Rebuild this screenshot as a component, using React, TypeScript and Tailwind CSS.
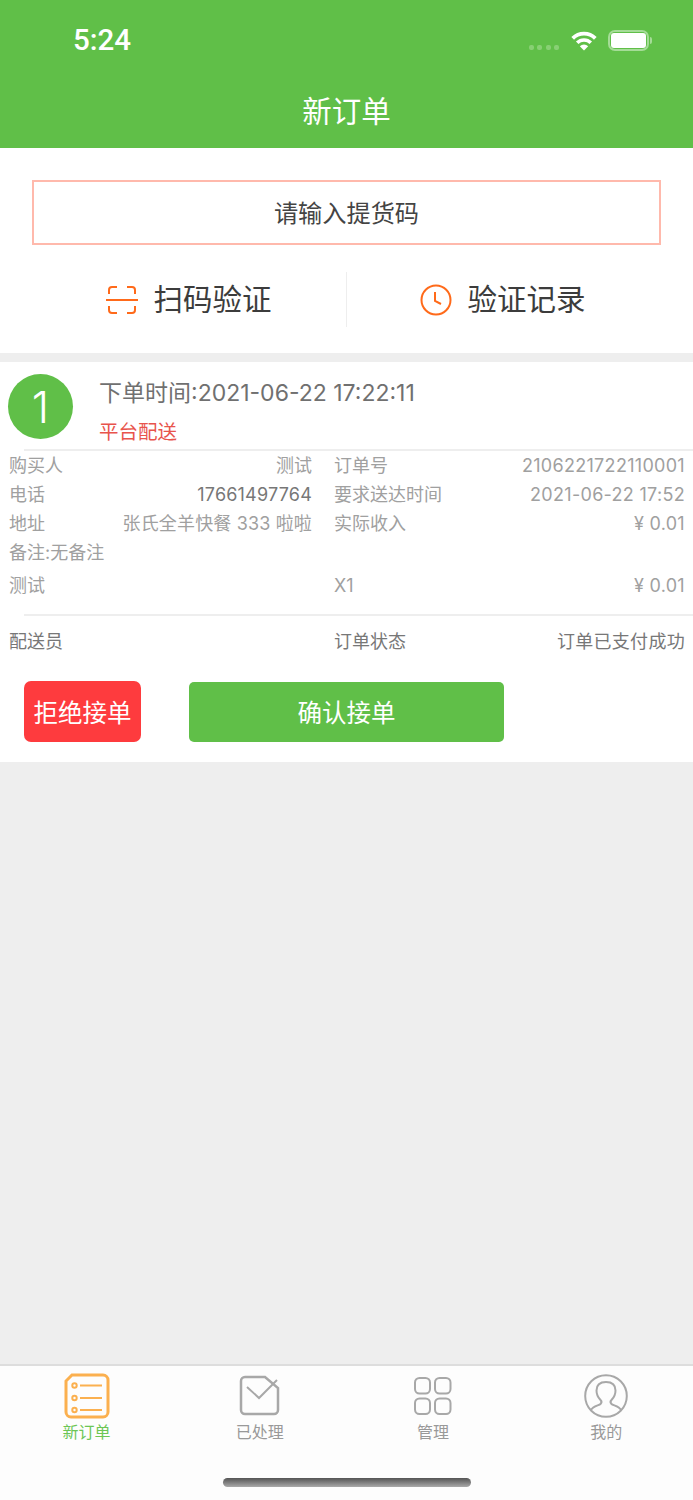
function WifiIcon() {
    return (
        <svg width="28" height="21" viewBox="0 0 28 21" fill="none" stroke="white">
            <path d="M2.700 8.300A16 16 0 0 1 25.300 8.300" strokeWidth="3.800" />
            <path d="M7.200 12.800A9.600 9.600 0 0 1 20.800 12.800" strokeWidth="3.500" />
            <path d="M14 20.500L9.800 16.300A6 6 0 0 1 18.200 16.300Z" fill="white" stroke="none" />
        </svg>
    );
}

function ScanIcon() {
    return (
        <svg width="32" height="30" viewBox="0 0 32 30" fill="none" stroke="#ff6a1a" strokeWidth="2">
            <path d="M3 9V5a3 3 0 0 1 3-3h5" />
            <path d="M21 2h5a3 3 0 0 1 3 3v4" />
            <path d="M3 21v4a3 3 0 0 0 3 3h5" />
            <path d="M21 28h5a3 3 0 0 0 3-3v-4" />
            <path d="M0 15h32" />
        </svg>
    );
}

function ClockIcon() {
    return (
        <svg width="32" height="32" viewBox="0 0 32 32" fill="none" stroke="#ff6a1a" strokeWidth="2">
            <circle cx="16" cy="16" r="14.500" />
            <path d="M15 8v9l6 3" />
        </svg>
    );
}

function OrderIcon() {
    return (
        <svg width="46" height="46" viewBox="0 0 46 46" fill="none" stroke="#fbb04f">
            <path d="M8 2h31a5 5 0 0 1 5 5v32a5 5 0 0 1-5 5H7a5 5 0 0 1-5-5V8z" strokeWidth="3" />
            <circle cx="10.500" cy="12.500" r="2.200" strokeWidth="2" />
            <circle cx="10.500" cy="25" r="2.200" strokeWidth="2" />
            <circle cx="10.500" cy="37" r="2.200" strokeWidth="2" />
            <path d="M16 12.500h22M16 25h22M16 37h22" strokeWidth="2.200" />
        </svg>
    );
}

function DoneIcon() {
    return (
        <svg width="41" height="41" viewBox="0 0 41 41" fill="none" stroke="#a8a8a8" strokeWidth="2.500" className="-mt-[1px]">
            <path d="M26 2H6a4 4 0 0 0-4 4v29a4 4 0 0 0 4 4h29a4 4 0 0 0 4-4V13z" />
            <path d="M8 12l12 11L38 5" strokeWidth="2" />
        </svg>
    );
}

function ManageIcon() {
    return (
        <svg width="38" height="38" viewBox="0 0 38 38" fill="none" stroke="#a8a8a8" strokeWidth="2" className="-mt-[1px]">
            <rect x="1" y="1" width="15" height="15.500" rx="4.500" />
            <rect x="21" y="1" width="15.500" height="15.500" rx="4.500" />
            <rect x="1" y="21.500" width="15" height="15.500" rx="4.500" />
            <rect x="21" y="21.500" width="15.500" height="15.500" rx="4.500" />
        </svg>
    );
}

function MineIcon() {
    return (
        <svg width="44" height="44" viewBox="0 0 44 44" fill="none" stroke="#a8a8a8" strokeWidth="2" className="-mt-[1px]">
            <circle cx="22" cy="22" r="20.800" />
            <path d="M7 36c2-4 8-4.500 9.500-6 1.500-1.500 1-3 0-4-2-2-4-5-4-9.500C12.500 11 16 8 22 8s9.500 3 9.500 8.500c0 4.500-2 7.500-4 9.500-1 1-1.500 2.500 0 4 1.500 1.500 7.500 2 9.500 6" />
        </svg>
    );
}

function InfoRow({ label, value, valueClass = 'text-[#a0a0a0]' }: { label: string; value: string; valueClass?: string }) {
    return (
        <div className="flex justify-between items-center h-[29px]">
            <span>{label}</span>
            <span className={valueClass}>{value}</span>
        </div>
    );
}

function TabItem({ icon, label, active = false }: { icon: React.ReactNode; label: string; active?: boolean }) {
    return (
        <div className="flex-1 flex flex-col items-center">
            <div className="h-[46px] flex items-center justify-center">{icon}</div>
            <span className={`mt-[2px] text-[16px] leading-[22px] ${active ? 'text-[#6cc655]' : 'text-[#999]'}`}>{label}</span>
        </div>
    );
}

export default function App() {
    return (
        <div className="w-[693px] h-[1500px] flex flex-col bg-[#eeeeee] font-['Inter','Noto_Sans_CJK_SC',sans-serif] overflow-hidden">
            <div className="h-[148px] bg-[#60bf48] text-white shrink-0">
                <div className="h-[80px] flex items-center justify-between pl-[73px] pr-[41px]">
                    <span className="text-[29.500px] font-medium font-['Roboto',sans-serif]">5:24</span>
                    <div className="flex items-center">
                        <div className="flex gap-[3.500px] mt-[14px] mr-[11px]">
                            <div className="w-[5px] h-[5px] rounded-[2px] bg-[#88d074]" />
                            <div className="w-[5px] h-[5px] rounded-[2px] bg-[#88d074]" />
                            <div className="w-[5px] h-[5px] rounded-[2px] bg-[#88d074]" />
                            <div className="w-[5px] h-[5px] rounded-[2px] bg-[#88d074]" />
                        </div>
                        <WifiIcon />
                        <div className="w-[41px] h-[21px] ml-[10px] rounded-[7px] border-2 border-[#a5dc97] p-[1px]">
                            <div className="w-full h-full rounded-[3px] bg-white" />
                        </div>
                        <div className="w-[2px] h-[7px] ml-[1px] rounded-r bg-[#a5dc97]" />
                    </div>
                </div>
                <div className="h-[62px] pt-[1px] flex items-center justify-center text-[29.500px]">新订单</div>
            </div>

            <div className="h-[205px] bg-white shrink-0 pt-[32px] px-[32px]">
                <div className="h-[65px] pt-[3px] border-2 border-[#ffb9ac] flex items-center justify-center text-[24.200px] text-[#444]">
                    请输入提货码
                </div>
                <div className="flex items-center -mx-[32px] mt-[27px] h-[55px] text-[29.500px] text-[#3c3c3c]">
                    <div className="w-[346px] flex items-center justify-center gap-[15px] pl-[32px]">
                        <ScanIcon />
                        <span>扫码验证</span>
                    </div>
                    <div className="w-px h-full bg-[#eeeeee]" />
                    <div className="flex-1 flex items-center justify-center gap-[15px] pr-[34px]">
                        <ClockIcon />
                        <span>验证记录</span>
                    </div>
                </div>
            </div>

            <div className="mt-[9px] h-[400px] bg-white shrink-0">
                <div className="flex h-[87px] pl-[8px] pt-[12px]">
                    <div className="w-[65px] h-[65px] rounded-full bg-[#60bf48] text-white text-[44px] font-light flex items-center justify-center">1</div>
                    <div className="ml-[26px]">
                        <div className="text-[23px] leading-[38px] text-[#707070]">下单时间:2021-06-22 17:22:11</div>
                        <div className="text-[19.500px] leading-[28px] mt-[6px] text-[#e8544c]">平台配送</div>
                    </div>
                </div>
                <div className="h-[2px] ml-[24px] bg-[#eeeeee]" />
                <div className="grid grid-cols-[303px_351px] gap-x-[22px] pl-[9px] text-[18px] text-[#a0a0a0]">
                    <div>
                        <InfoRow label="购买人" value="测试" />
                        <InfoRow label="电话" value="17661497764" valueClass="text-[#777] tracking-[0.2px]" />
                        <InfoRow label="地址" value="张氏全羊快餐 333 啦啦" valueClass="text-[#a0a0a0] tracking-[0.150px]" />
                    </div>
                    <div>
                        <InfoRow label="订单号" value="2106221722110001" valueClass="text-[#a0a0a0] tracking-[0.3px]" />
                        <InfoRow label="要求送达时间" value="2021-06-22 17:52" valueClass="text-[#a0a0a0] tracking-[0.3px]" />
                        <InfoRow label="实际收入" value="¥ 0.01" valueClass="text-[#a0a0a0] tracking-[0.3px]" />
                    </div>
                </div>
                <div className="pl-[9px] h-[29px] flex items-center text-[18px] text-[#a0a0a0]">备注:无备注</div>
                <div className="grid grid-cols-[303px_351px] gap-x-[22px] pl-[9px] mt-[4px] h-[29px] items-center text-[18px] text-[#a0a0a0]">
                    <span>测试</span>
                    <div className="flex justify-between">
                        <span>X1</span>
                        <span className="tracking-[0.3px]">¥ 0.01</span>
                    </div>
                </div>
                <div className="h-[2px] ml-[24px] mt-[14px] bg-[#eeeeee]" />
                <div className="grid grid-cols-[303px_351px] gap-x-[22px] pl-[9px] mt-[11px] h-[29px] items-center text-[18px] text-[#777]">
                    <span>配送员</span>
                    <div className="flex justify-between">
                        <span>订单状态</span>
                        <span className="tracking-[0.3px]">订单已支付成功</span>
                    </div>
                </div>
                <div className="flex items-center pl-[24px] mt-[25px]">
                    <div className="w-[117px] h-[61px] pt-[3px] rounded-[7px] bg-[#fe3b3e] text-white text-[24.500px] flex items-center justify-center">拒绝接单</div>
                    <div className="w-[315px] h-[60px] pt-[3px] ml-[48px] rounded-[5px] bg-[#60bf48] text-white text-[24.500px] flex items-center justify-center">确认接单</div>
                </div>
            </div>

            <div className="flex-1" />

            <div className="h-[136px] shrink-0 bg-[#fdfdfd] border-t-2 border-[#dddddd] flex flex-col">
                <div className="flex pt-[7px]">
                    <TabItem icon={<OrderIcon />} label="新订单" active />
                    <TabItem icon={<DoneIcon />} label="已处理" />
                    <TabItem icon={<ManageIcon />} label="管理" />
                    <TabItem icon={<MineIcon />} label="我的" />
                </div>
                <div className="mt-[35px] mx-auto w-[248px] h-[9px] rounded-full bg-gradient-to-b from-[#555] to-[#aaa]" />
            </div>
        </div>
    );
}
